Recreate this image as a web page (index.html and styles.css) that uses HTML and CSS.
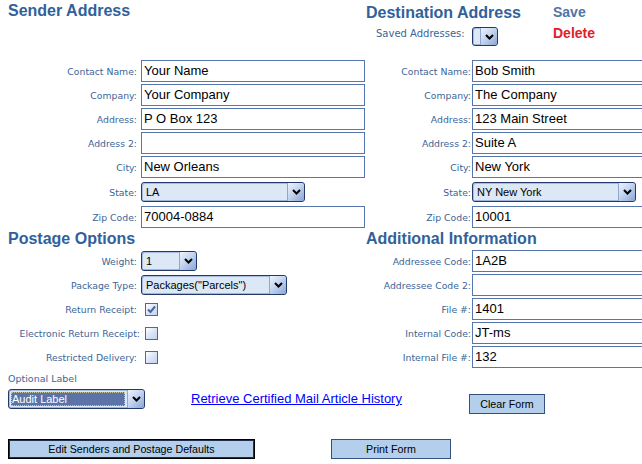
FILE: index.html
```html
<!DOCTYPE html>
<html>
<head>
<meta charset="utf-8">
<title>Certified Mail Form</title>
<link rel="stylesheet" href="styles.css">
</head>
<body>
<div class="page">
  <div class="form-grid">
    <div class="head-left"><h1 class="title">Sender Address</h1></div>
    <div class="head-right">
      <div class="dest">
        <h1 class="title dest-title">Destination Address</h1>
        <div class="saved">
          <span class="saved-label">Saved Addresses:</span>
          <div class="sel sel-saved"><span class="val"></span><span class="arr"><svg width="9" height="6" viewBox="0 0 9 6"><path d="M1 1l3.5 3.5L8 1" stroke="#000" stroke-width="2" fill="none"/></svg></span></div>
        </div>
      </div>
      <div class="actions"><span class="save">Save</span><span class="delete">Delete</span></div>
    </div>

    <div class="lbl">Contact Name:</div><div class="cell"><div class="field">Your Name</div></div>
    <div class="lbl lbl-r">Contact Name:</div><div class="cell"><div class="field">Bob Smith</div></div>

    <div class="lbl">Company:</div><div class="cell"><div class="field">Your Company</div></div>
    <div class="lbl lbl-r">Company:</div><div class="cell"><div class="field">The Company</div></div>

    <div class="lbl">Address:</div><div class="cell"><div class="field">P O Box 123</div></div>
    <div class="lbl lbl-r">Address:</div><div class="cell"><div class="field">123 Main Street</div></div>

    <div class="lbl">Address 2:</div><div class="cell"><div class="field"></div></div>
    <div class="lbl lbl-r">Address 2:</div><div class="cell"><div class="field">Suite A</div></div>

    <div class="lbl">City:</div><div class="cell"><div class="field">New Orleans</div></div>
    <div class="lbl lbl-r">City:</div><div class="cell"><div class="field">New York</div></div>

    <div class="lbl">State:</div><div class="cell"><div class="sel sel-state"><span class="val">LA</span><span class="arr"><svg width="9" height="6" viewBox="0 0 9 6"><path d="M1 1l3.5 3.5L8 1" stroke="#000" stroke-width="2" fill="none"/></svg></span></div></div>
    <div class="lbl lbl-r">State:</div><div class="cell"><div class="sel sel-state"><span class="val">NY New York</span><span class="arr"><svg width="9" height="6" viewBox="0 0 9 6"><path d="M1 1l3.5 3.5L8 1" stroke="#000" stroke-width="2" fill="none"/></svg></span></div></div>

    <div class="lbl">Zip Code:</div><div class="cell"><div class="field">70004-0884</div></div>
    <div class="lbl lbl-r">Zip Code:</div><div class="cell"><div class="field">10001</div></div>

    <div class="head-left"><h1 class="title sub-title">Postage Options</h1></div>
    <div class="head-right"><h1 class="title sub-title">Additional Information</h1></div>

    <div class="lbl">Weight:</div><div class="cell"><div class="sel sel-weight"><span class="val">1</span><span class="arr"><svg width="9" height="6" viewBox="0 0 9 6"><path d="M1 1l3.5 3.5L8 1" stroke="#000" stroke-width="2" fill="none"/></svg></span></div></div>
    <div class="lbl lbl-r">Addressee Code:</div><div class="cell"><div class="field">1A2B</div></div>

    <div class="lbl">Package Type:</div><div class="cell"><div class="sel sel-pkg"><span class="val">Packages("Parcels")</span><span class="arr"><svg width="9" height="6" viewBox="0 0 9 6"><path d="M1 1l3.5 3.5L8 1" stroke="#000" stroke-width="2" fill="none"/></svg></span></div></div>
    <div class="lbl lbl-r">Addressee Code 2:</div><div class="cell"><div class="field"></div></div>

    <div class="lbl">Return Receipt:</div><div class="cell"><span class="chk"><svg width="11" height="11" viewBox="0 0 11 11"><path d="M2 5.5l2.5 2.5L9 2.5" stroke="#4b67a0" stroke-width="2" fill="none"/></svg></span></div>
    <div class="lbl lbl-r">File #:</div><div class="cell"><div class="field">1401</div></div>

    <div class="lbl lbl-wide">Electronic Return Receipt:</div><div class="cell"><span class="chk"></span></div>
    <div class="lbl lbl-r">Internal Code:</div><div class="cell"><div class="field">JT-ms</div></div>

    <div class="lbl">Restricted Delivery:</div><div class="cell"><span class="chk"></span></div>
    <div class="lbl lbl-r">Internal File #:</div><div class="cell"><div class="field">132</div></div>
  </div>

  <div class="bottom">
    <div class="opt-label">Optional Label</div>
    <div class="opt-row">
      <div class="sel sel-audit"><span class="val"><span class="hl">Audit Label</span></span><span class="arr"><svg width="9" height="6" viewBox="0 0 9 6"><path d="M1 1l3.5 3.5L8 1" stroke="#000" stroke-width="2" fill="none"/></svg></span></div>
      <a class="history" href="#">Retrieve Certified Mail Article History</a>
      <button class="btn btn-clear">Clear Form</button>
    </div>
    <div class="btn-row">
      <button class="btn btn-edit">Edit Senders and Postage Defaults</button>
      <button class="btn btn-print">Print Form</button>
    </div>
  </div>
</div>
</body>
</html>
```
FILE: styles.css
```css
html, body {
  margin: 0;
  padding: 0;
  overflow: hidden;
  background: #ffffff;
}

.page {
  box-sizing: border-box;
  padding-left: 8px;
  width: 642px;
  height: 464px;
  overflow: hidden;
  font-family: "Liberation Sans", Arial, sans-serif;
}

.form-grid {
  display: grid;
  grid-template-columns: 133px 224px 107px 224px;
  grid-template-rows: 59px repeat(5, 24px) 26px 24px 20px repeat(5, 24px);
}

.head-left {
  grid-column: 1 / 3;
}

.head-right {
  grid-column: 3 / 5;
  padding-left: 1px;
  display: flex;
}

.title {
  margin: 2px 0 0 0;
  font-family: "Liberation Sans", Arial, sans-serif;
  font-weight: bold;
  font-size: 16px;
  line-height: 18px;
  color: #30619b;
}

.dest {
  width: 187px;
}

.dest-title {
  margin-top: 4px;
}

.saved {
  display: flex;
  align-items: flex-start;
  margin-top: 5px;
  padding-left: 10px;
}

.saved-label {
  font-family: "DejaVu Sans", Verdana, sans-serif;
  font-size: 10px;
  line-height: 12px;
  margin-top: 1px;
  color: #3b6598;
  width: 96px;
}

.actions {
  display: flex;
  flex-direction: column;
  padding-top: 4px;
  font-weight: bold;
  font-size: 14px;
  line-height: 16px;
}

.save {
  color: #4f76a8;
}

.delete {
  color: #e0202a;
  margin-top: 5px;
}

.sub-title {
  margin-top: 0;
  line-height: 20px;
}

.lbl {
  display: flex;
  align-items: center;
  justify-content: flex-end;
  padding-right: 4px;
  font-family: "DejaVu Sans", Verdana, sans-serif;
  font-size: 9.3px;
  color: #3b6598;
  white-space: nowrap;
}

.lbl-r {
  padding-right: 1px;
}

.lbl-wide {
  margin-right: -3px;
}

.cell {
  display: flex;
  align-items: center;
}

.field {
  box-sizing: border-box;
  width: 224px;
  height: 22px;
  border: 1px solid #5677ad;
  background: #ffffff;
  padding: 0 2px;
  font-size: 13px;
  line-height: 20px;
  color: #000000;
  white-space: nowrap;
}

.sel {
  box-sizing: border-box;
  display: flex;
  height: 20px;
  border: 1px solid #22396a;
  border-radius: 3px;
  background: #dde8f6;
  box-shadow: inset 1px 1px 0 #a9bde0, inset -1px -1px 0 #9fb4da;
  overflow: hidden;
}

.sel .val {
  flex: 1;
  padding-left: 4px;
  font-size: 11px;
  line-height: 18px;
  color: #000000;
  white-space: nowrap;
  overflow: hidden;
}

.sel .arr {
  width: 16px;
  display: flex;
  align-items: center;
  justify-content: center;
  border-left: 1px solid #8ea7d2;
  background: linear-gradient(135deg, #eef3fc 0%, #c5d5ef 45%, #8aa5d6 100%);
  border-radius: 0 2px 2px 0;
}

.sel-state {
  width: 164px;
}

.sel-weight {
  width: 56px;
}

.sel-pkg {
  width: 146px;
}

.sel-saved {
  width: 26px;
  height: 19px;
}

.sel-saved .val {
  padding-left: 0;
}

.chk {
  box-sizing: border-box;
  width: 13px;
  height: 13px;
  margin-left: 4px;
  border: 1px solid #4f67a0;
  background: linear-gradient(135deg, #ffffff 0%, #dbe4f8 50%, #c3d2f1 100%);
  display: flex;
  align-items: center;
  justify-content: center;
}

.bottom {
  display: flex;
  flex-direction: column;
}

.opt-label {
  margin-top: 4px;
  font-family: "DejaVu Sans", Verdana, sans-serif;
  font-size: 9.5px;
  line-height: 12px;
  color: #3b6598;
}

.opt-row {
  display: flex;
  align-items: flex-start;
  margin-top: 4px;
}

.sel-audit {
  width: 137px;
}

.sel-audit .val {
  padding: 2px;
}

.sel-audit .hl {
  display: block;
  height: 14px;
  line-height: 14px;
  padding-left: 1px;
  background: #5b73a6;
  color: #ffffff;
  outline: 1px dotted #c8c8a0;
  outline-offset: -1px;
}

.history {
  margin-left: 46px;
  margin-top: 2px;
  font-size: 13px;
  line-height: 15px;
  color: #0000ff;
  text-decoration: underline;
}

.btn {
  box-sizing: border-box;
  height: 20px;
  padding: 0;
  background: #b4cfec;
  border: 1px solid #34507f;
  font-family: "Liberation Sans", Arial, sans-serif;
  font-size: 10.7px;
  color: #000000;
}

.btn-clear {
  width: 76px;
  margin-left: 67px;
  margin-top: 5px;
}

.btn-row {
  display: flex;
  margin-top: 25px;
}

.btn-edit {
  width: 247px;
  border: 1px solid #000000;
  box-shadow: inset 0 0 0 1px #1f2f52;
}

.btn-print {
  width: 120px;
  margin-left: 76px;
}
```
